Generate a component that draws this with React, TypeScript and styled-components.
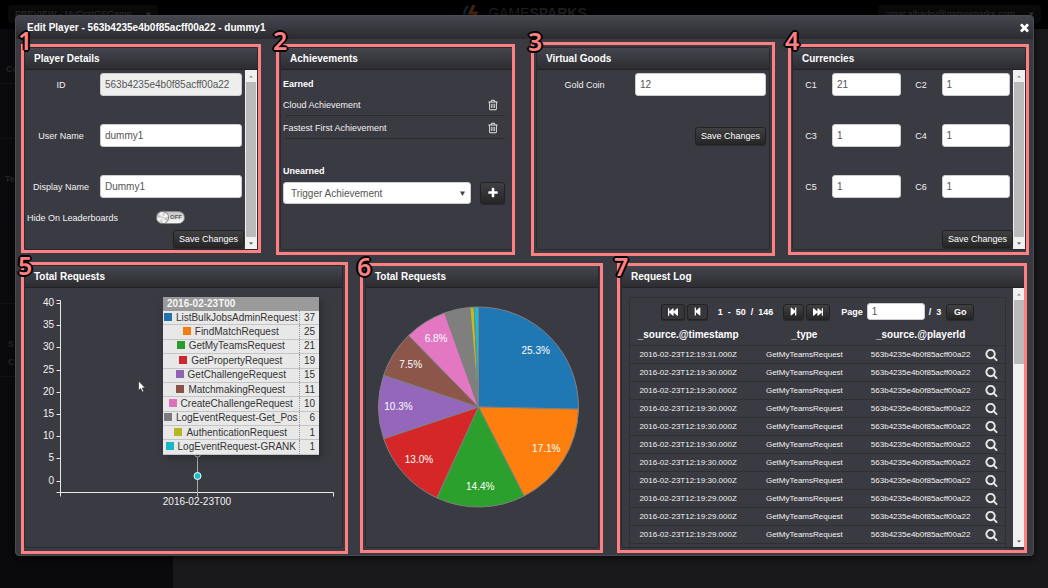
import React from "react";
import styled, { createGlobalStyle } from "styled-components";
import {
  FaFastBackward,
  FaFastForward,
  FaStepBackward,
  FaStepForward,
} from "react-icons/fa";

const PINK = "#ff8080";

const GlobalStyle = createGlobalStyle`
  * { box-sizing: border-box; }
  body {
    margin: 0;
    background: #19191b;
    color: #f2f2f2;
    font-family: "Liberation Sans", Arial, sans-serif;
    font-size: 9px;
    line-height: 12px;
  }
  button, input, select { font-family: inherit; margin: 0; }
`;

/* ---------- page behind the dialog ---------- */

const Page = styled.div`
  position: relative;
  min-height: 100vh;
  display: flex;
  flex-direction: column;
  overflow: hidden;
`;

const TopBar = styled.header`
  height: 29px;
  flex: none;
  display: grid;
  grid-template-columns: 1fr auto 1fr;
  align-items: start;
  padding: 5px 7px 0 8px;
  background: #000;
  color: #2b2b2b;
`;

const Picker = styled.button<{ $end?: boolean }>`
  justify-self: ${(p) => (p.$end ? "end" : "start")};
  height: 18px;
  display: flex;
  align-items: center;
  gap: 14px;
  padding: 0 7px;
  border: 0;
  border-radius: 3px;
  background: #0a0a0a;
  color: #303030;
  font-size: 9px;
`;

const Brand = styled.div`
  display: flex;
  align-items: center;
  gap: 8px;
  font-size: 14px;
  line-height: 17px;
  color: #1e1e1e;
`;

const Backdrop = styled.div`
  flex: 1;
  display: grid;
  grid-template-columns: 173px 1fr;
`;

const Sidebar = styled.nav`
  background: #0a0a0c;
  color: #262628;
  font-weight: bold;
  display: flex;
  flex-direction: column;
`;

const SideGroup = styled.div<{ $height: number; $indent: number; $top: number }>`
  height: ${(p) => p.$height}px;
  padding: ${(p) => p.$top}px ${(p) => p.$indent}px 0;
  display: flex;
  flex-direction: column;
  gap: 6px;
  border-bottom: 1px solid #111114;
`;

/* ---------- dialog ---------- */

const Dialog = styled.section`
  position: absolute;
  top: 15px;
  left: 15px;
  right: 14px;
  border: 1px solid #4b4b53;
  border-radius: 4px;
  background: #3a3a42;
  box-shadow: 0 2px 6px rgba(0, 0, 0, 0.7);
`;

const DialogHeader = styled.header`
  height: 23px;
  display: flex;
  align-items: center;
  justify-content: space-between;
  padding: 0 2px 0 11px;
  border-radius: 3px 3px 0 0;
  background: linear-gradient(#46464f, #2a2a2f);
`;

const DialogTitle = styled.h1`
  margin: 0;
  font-size: 10px;
  line-height: 12px;
  color: #fff;
`;

const CloseButton = styled.button`
  display: flex;
  padding: 0;
  border: 0;
  background: none;
  color: #fff;
`;

const DialogBody = styled.div`
  display: flex;
  flex-direction: column;
  gap: 15px;
  padding: 8px 7px 7px 8px;
`;

const PanelRow = styled.div<{ $columns: string }>`
  display: grid;
  grid-template-columns: ${(p) => p.$columns};
  gap: 22px;
`;

const PanelBox = styled.section`
  position: relative;
  min-width: 0;
  border: 1px solid #2a2a2e;
  border-radius: 3px;
`;

const PanelTitle = styled.h2`
  margin: 0;
  height: 22px;
  padding: 0 9px;
  border-bottom: 1px solid #232327;
  background: linear-gradient(#45454e, #2c2c31);
  font-size: 10px;
  line-height: 22px;
  color: #fff;
`;

const PanelBody = styled.div<{ $height: number }>`
  height: ${(p) => p.$height}px;
  display: flex;
  overflow: hidden;
`;

const PanelContent = styled.div`
  flex: 1;
  min-width: 0;
  position: relative;
`;

/* ---------- numbered highlight ---------- */

type Outset = [number, number, number, number];

const Frame = styled.div<{ $outset: Outset }>`
  position: absolute;
  inset: ${(p) => p.$outset.map((n) => `${-n - 1}px`).join(" ")};
  border: 3px solid ${PINK};
  pointer-events: none;
`;

const Marker = styled.span<{ $lift: number }>`
  position: absolute;
  left: -6px;
  top: ${(p) => -p.$lift}px;
  font-family: "Noto Sans", "Open Sans", sans-serif;
  font-size: 25px;
  font-weight: 600;
  line-height: 26px;
  color: ${PINK};
  text-shadow:
    2px 0 #000, -2px 0 #000, 0 2px #000, 0 -2px #000,
    1px 1px #000, -1px 1px #000, 1px -1px #000, -1px -1px #000;
`;

/* ---------- scroll bar ---------- */

const Track = styled.div`
  width: 12px;
  flex: none;
  display: flex;
  flex-direction: column;
  align-items: center;
  background: #f0f0f0;
`;

const Thumb = styled.div<{ $height?: number }>`
  width: 10px;
  ${(p) => (p.$height ? `height: ${p.$height}px;` : "flex: 1;")}
  background: #bababa;
`;

const Arrow = styled.svg<{ $last?: boolean }>`
  flex: none;
  width: 12px;
  height: 12px;
  ${(p) => p.$last && "margin-top: auto;"}
`;

function ScrollBar({ thumb }: { thumb?: number }) {
  return (
    <Track aria-hidden="true">
      <Arrow viewBox="0 0 12 12">
        <path d="M4 7.500L6 5.500L8 7.500Z" fill="#8c8c8c" />
      </Arrow>
      <Thumb $height={thumb} />
      <Arrow viewBox="0 0 12 12" $last>
        <path d="M4 5.500L6 7.500L8 5.500Z" fill="#444" />
      </Arrow>
    </Track>
  );
}

/* ---------- form parts ---------- */

const Button = styled.button`
  height: 18px;
  display: inline-flex;
  align-items: center;
  justify-content: center;
  padding: 0 5px;
  border: 1px solid #222;
  border-radius: 3px;
  background: linear-gradient(#404042, #262627);
  box-shadow: 0 1px 1px rgba(0, 0, 0, 0.3);
  color: #fff;
  font-size: 9px;
  line-height: 12px;
  white-space: nowrap;
`;

const TextBox = styled.input`
  width: 100%;
  min-width: 0;
  height: 23px;
  padding: 0 4px;
  border: 1px solid #ccc;
  border-radius: 3px;
  background: #fff;
  color: #555;
  font-size: 10px;
  &:read-only { background: #eee; }
`;

const Form = styled.form`
  display: flex;
  flex-direction: column;
  padding-top: 3px;
`;

const Fields = styled.div<{ $columns: string }>`
  display: grid;
  grid-template-columns: ${(p) => p.$columns};
  align-items: center;
  gap: 28px 3px;
  padding-right: 3px;
`;

const Label = styled.label`
  text-align: center;
  white-space: nowrap;
`;

const ToggleRow = styled.div`
  display: grid;
  grid-template-columns: 129px auto;
  align-items: center;
  justify-content: start;
  height: 13px;
  margin: 13px 0 6px;
  padding-left: 2px;
`;

const Toggle = styled.input`
  appearance: none;
  width: 29px;
  height: 13px;
  margin: 0;
  display: flex;
  align-items: center;
  border: 1px solid #888;
  border-radius: 7px;
  background: linear-gradient(#c4c4c4, #fafafa);
  &::before {
    content: "";
    width: 11px;
    height: 11px;
    border-radius: 50%;
    box-shadow: 0 0 1px 1px #777;
    background: conic-gradient(from 20deg, #ccc, #fff 12%, #bbb 25%, #fff 38%, #ccc 50%, #fff 62%, #bbb 75%, #fff 88%, #ccc);
  }
  &::after {
    content: "OFF";
    margin-left: 2px;
    font-size: 6px;
    line-height: 11px;
    font-weight: bold;
    color: #555;
  }
`;

const Actions = styled.div<{ $top?: number; $right?: number }>`
  display: flex;
  justify-content: flex-end;
  padding: ${(p) => p.$top ?? 0}px ${(p) => p.$right ?? 0}px 0 0;
`;

/* ---------- achievements ---------- */

const Achievements = styled.div`
  padding: 8px 8px 0 2px;
`;

const GroupTitle = styled.h3`
  margin: 0;
  font-size: 9px;
  line-height: 12px;
  color: #fff;
`;

const EarnedList = styled.ul`
  list-style: none;
  margin: 3px 0 26px;
  padding: 0;
`;

const EarnedItem = styled.li`
  height: 23px;
  display: flex;
  align-items: center;
  justify-content: space-between;
  padding-right: 6px;
  background: linear-gradient(#2b2b30, #2b2b30) 3px 100% / 100% 1px no-repeat;
`;

const IconButton = styled.button`
  display: flex;
  padding: 0;
  border: 0;
  background: none;
  color: #e8e8e8;
`;

const TriggerRow = styled.div`
  display: grid;
  grid-template-columns: 1fr 25px;
  gap: 9px;
  align-items: center;
  margin-top: 5px;
`;

const SelectWrap = styled.div`
  position: relative;
`;

const Select = styled.select`
  appearance: none;
  width: 100%;
  height: 22px;
  padding: 0 7px;
  border: 1px solid #ccc;
  border-radius: 3px;
  background: #fff;
  color: #555;
  font-size: 10px;
`;

const Caret = styled.svg`
  position: absolute;
  right: 6px;
  top: 9px;
  width: 5px;
  height: 5px;
  pointer-events: none;
`;

const SquareButton = styled(Button)`
  height: 22px;
  padding: 0;
`;

/* ---------- charts ---------- */

const Chart = styled.svg`
  display: block;
  width: 100%;
  height: 100%;
  font-size: 10px;
`;

const Tip = styled.table`
  position: absolute;
  left: 138px;
  top: 9px;
  width: 156px;
  height: 158px;
  border-collapse: collapse;
  opacity: 0.95;
  background: #f2f2f2;
  box-shadow: 3px 3px 6px rgba(30, 30, 30, 0.5);
  color: #333;
  font-size: 10px;
  line-height: 12px;
`;

const TipHead = styled.th`
  height: 14px;
  padding: 0 4px;
  background: #a0a0a0;
  color: #fff;
  text-align: left;
`;

const TipName = styled.td`
  padding: 0;
  border-bottom: 1px solid #ccc;
  text-align: center;
  white-space: nowrap;
`;

const TipValue = styled.td`
  width: 20px;
  padding: 0 4px 0 0;
  border-bottom: 1px solid #ccc;
  border-left: 1px dotted #999;
  text-align: right;
`;

const Swatch = styled.span<{ $color: string }>`
  display: inline-block;
  width: 8px;
  height: 8px;
  margin-right: 4px;
  background: ${(p) => p.$color};
`;

/* ---------- request log ---------- */

const LogBox = styled.div`
  margin: 9px 7px 0;
  border: 1px solid #2f2f34;
`;

const Pager = styled.div`
  height: 27px;
  display: flex;
  align-items: center;
  justify-content: center;
  gap: 2px;
  font-weight: bold;
  color: #fff;
`;

const PagerButton = styled(Button)<{ $width: number; $dim?: boolean }>`
  width: ${(p) => p.$width}px;
  height: 16px;
  padding: 0;
  font-weight: bold;
  ${(p) => p.$dim && "background: #36363a;"}
`;

const PagerText = styled.span`
  padding: 0 8px;
  white-space: pre;
`;

const PageJump = styled.label`
  display: flex;
  align-items: center;
  gap: 4px;
  padding: 0 3px 0 9px;
  white-space: nowrap;
`;

const PageBox = styled(TextBox)`
  width: 58px;
  height: 17px;
`;

const LogTable = styled.table`
  width: 100%;
  table-layout: fixed;
  border-collapse: collapse;
  text-align: center;
  white-space: nowrap;
`;

const LogColumn = styled.col<{ $share: number }>`
  width: ${(p) => p.$share}%;
`;

const LogHead = styled.th`
  height: 20px;
  padding: 0;
  font-size: 10px;
  color: #fff;
`;

const LogCell = styled.td`
  height: 18px;
  padding: 1px 0 0;
  border-top: 1px solid #2f2f34;
  font-size: 8px;
`;

const LogIconCell = styled(LogCell)`
  padding: 0;
`;

const LogIconButton = styled(IconButton)`
  margin: 0 auto;
`;

/* ---------- data ---------- */

const REQUESTS = [
  { name: "ListBulkJobsAdminRequest", value: 37, color: "#1f77b4" },
  { name: "FindMatchRequest", value: 25, color: "#ff7f0e" },
  { name: "GetMyTeamsRequest", value: 21, color: "#2ca02c" },
  { name: "GetPropertyRequest", value: 19, color: "#d62728" },
  { name: "GetChallengeRequest", value: 15, color: "#9467bd" },
  { name: "MatchmakingRequest", value: 11, color: "#8c564b" },
  { name: "CreateChallengeRequest", value: 10, color: "#e377c2" },
  { name: "LogEventRequest-Get_Pos", value: 6, color: "#7f7f7f" },
  { name: "AuthenticationRequest", value: 1, color: "#bcbd22" },
  { name: "LogEventRequest-GRANK", value: 1, color: "#17becf" },
];

const CURRENCIES = [
  ["C1", "21"],
  ["C2", "1"],
  ["C3", "1"],
  ["C4", "1"],
  ["C5", "1"],
  ["C6", "1"],
];

const LOG_SECONDS = [31, 30, 30, 30, 30, 30, 30, 30, 29, 29, 29];
const PLAYER_ID = "563b4235e4b0f85acff00a22";

/* ---------- icons ---------- */

function Icon({ size, d }: { size: number; d: string }) {
  return (
    <svg width={size} height={size} viewBox="0 0 1792 1792" fill="currentColor" aria-hidden="true">
      <path d={d} />
    </svg>
  );
}

const TRASH =
  "M704 736v576q0 14-9 23t-23 9h-64q-14 0-23-9t-9-23v-576q0-14 9-23t23-9h64q14 0 23 9t9 23zm256 0v576q0 14-9 23t-23 9h-64q-14 0-23-9t-9-23v-576q0-14 9-23t23-9h64q14 0 23 9t9 23zm256 0v576q0 14-9 23t-23 9h-64q-14 0-23-9t-9-23v-576q0-14 9-23t23-9h64q14 0 23 9t9 23zm128 724v-948h-896v948q0 22 7 40.500t14.500 27 10.500 8.500h832q3 0 10.500-8.500t14.500-27 7-40.500zm-672-1076h448l-48-117q-7-9-17-11h-317q-10 2-17 11zm928 32v64q0 14-9 23t-23 9h-96v948q0 83-47 143.500t-113 60.500h-832q-66 0-113-58.500t-47-141.500v-952h-96q-14 0-23-9t-9-23v-64q0-14 9-23t23-9h309l70-167q15-37 54-63t79-26h320q40 0 79 26t54 63l70 167h309q14 0 23 9t9 23z";
const SEARCH =
  "M1216 832q0-185-131.500-316.500t-316.500-131.500-316.500 131.500-131.500 316.500 131.500 316.500 316.500 131.500 316.500-131.500 131.500-316.500zm512 832q0 52-38 90t-90 38q-54 0-90-38l-343-342q-179 124-399 124-143 0-273.500-55.500t-225-150-150-225-55.500-273.500 55.500-273.500 150-225 225-150 273.500-55.500 273.500 55.500 225 150 150 225 55.500 273.500q0 220-124 399l343 343q37 37 37 90z";
const TIMES =
  "M1490 1322q0 40-28 68l-136 136q-28 28-68 28t-68-28l-294-294-294 294q-28 28-68 28t-68-28l-136-136q-28-28-28-68t28-68l294-294-294-294q-28-28-28-68t28-68l136-136q28-28 68-28t68 28l294 294 294-294q28-28 68-28t68 28l136 136q28 28 28 68t-28 68l-294 294 294 294q28 28 28 68z";
const PLUS =
  "M1600 736v192q0 40-28 68t-68 28h-416v416q0 40-28 68t-68 28h-192q-40 0-68-28t-28-68v-416h-416q-40 0-68-28t-28-68v-192q0-40 28-68t68-28h416v-416q0-40 28-68t68-28h192q40 0 68 28t28 68v416h416q40 0 68 28t28 68z";

/* ---------- pieces ---------- */

type PanelProps = {
  number: number;
  title: string;
  height: number;
  outset: Outset;
  lift: number;
  scroll?: boolean;
  thumb?: number;
  children: React.ReactNode;
};

function Panel({ number, title, height, outset, lift, scroll, thumb, children }: PanelProps) {
  return (
    <PanelBox>
      <PanelTitle>{title}</PanelTitle>
      <PanelBody $height={height}>
        <PanelContent>{children}</PanelContent>
        {scroll && <ScrollBar thumb={thumb} />}
      </PanelBody>
      <Frame $outset={outset}>
        <Marker $lift={lift}>{number}</Marker>
      </Frame>
    </PanelBox>
  );
}

function LineChart() {
  const ticks = [40, 35, 30, 25, 20, 15, 10, 5, 0];
  return (
    <>
      <Chart viewBox="0 0 317 259" preserveAspectRatio="xMinYMin meet">
        <g stroke="#e8e8e8" strokeWidth="1" fill="none">
          <path d="M31.500 12.500H35.500V208.500" />
          <path d="M31.500 204.500H308.500V208.500" />
          <path d="M172.500 166V208.500" stroke="#aaa" />
          {ticks.map((t, i) => (
            <path key={t} d={`M31.500 ${Math.round(15 + i * 22.2) + 0.5}H35.500`} />
          ))}
        </g>
        <g fill="#f2f2f2">
          {ticks.map((t, i) => (
            <text key={t} x="29" y={Math.round(18 + i * 22.2)} textAnchor="end">
              {t}
            </text>
          ))}
          <text x="172" y="217" textAnchor="middle">2016-02-23T00</text>
        </g>
        <circle cx="172.500" cy="166" r="3" fill="#3a3a42" stroke="#ddd" />
        <circle cx="172.500" cy="188" r="3.500" fill="#17becf" stroke="#fff" />
        <path d="M113.500 93v9.500l2.200-2 1.500 3.400 1.600-.7-1.500-3.300h3z" fill="#fff" stroke="#222" strokeWidth=".6" />
      </Chart>
      <Tip>
        <thead>
          <tr>
            <TipHead colSpan={2}>2016-02-23T00</TipHead>
          </tr>
        </thead>
        <tbody>
          {REQUESTS.map((r) => (
            <tr key={r.name}>
              <TipName>
                <Swatch $color={r.color} />
                {r.name}
              </TipName>
              <TipValue>{r.value}</TipValue>
            </tr>
          ))}
        </tbody>
      </Tip>
    </>
  );
}

function PieChart() {
  const total = REQUESTS.reduce((sum, r) => sum + r.value, 0);
  const cx = 112.5;
  const cy = 119;
  const radius = 100;
  const point = (turn: number, r: number) => [
    cx + r * Math.sin(turn * 2 * Math.PI),
    cy - r * Math.cos(turn * 2 * Math.PI),
  ];
  let start = 0;
  return (
    <Chart viewBox="0 0 232 259" preserveAspectRatio="xMinYMin meet">
      {REQUESTS.map((r) => {
        const from = start;
        const share = r.value / total;
        start += share;
        const [x1, y1] = point(from, radius);
        const [x2, y2] = point(start, radius);
        const [tx, ty] = point(from + share / 2, radius * 0.8);
        return (
          <g key={r.name}>
            <path
              d={`M${cx} ${cy}L${x1} ${y1}A${radius} ${radius} 0 0 1 ${x2} ${y2}Z`}
              fill={r.color}
              stroke="#808080"
            />
            {share > 0.05 && (
              <text x={tx} y={ty + 3} textAnchor="middle" fill="#fff">
                {(share * 100).toFixed(1)}%
              </text>
            )}
          </g>
        );
      })}
    </Chart>
  );
}

function RequestLog() {
  return (
    <LogBox>
      <Pager>
        <PagerButton $width={24} $dim aria-label="First page"><FaFastBackward size={10} /></PagerButton>
        <PagerButton $width={21} $dim aria-label="Previous page"><FaStepBackward size={9} /></PagerButton>
        <PagerText>1  -  50  /  146</PagerText>
        <PagerButton $width={21} aria-label="Next page"><FaStepForward size={9} /></PagerButton>
        <PagerButton $width={24} aria-label="Last page"><FaFastForward size={10} /></PagerButton>
        <PageJump>
          Page
          <PageBox defaultValue="1" />
          <span>/ &nbsp;3</span>
        </PageJump>
        <PagerButton $width={28}>Go</PagerButton>
      </Pager>
      <LogTable>
        <colgroup>
          <LogColumn $share={31} />
          <LogColumn $share={31} />
          <LogColumn $share={31} />
          <LogColumn $share={7} />
        </colgroup>
        <thead>
          <tr>
            <LogHead>_source.@timestamp</LogHead>
            <LogHead>_type</LogHead>
            <LogHead>_source.@playerId</LogHead>
            <LogHead />
          </tr>
        </thead>
        <tbody>
          {LOG_SECONDS.map((s, i) => (
            <tr key={i}>
              <LogCell>2016-02-23T12:19:{s}.000Z</LogCell>
              <LogCell>GetMyTeamsRequest</LogCell>
              <LogCell>{PLAYER_ID}</LogCell>
              <LogIconCell>
                <LogIconButton aria-label="View request"><Icon size={13} d={SEARCH} /></LogIconButton>
              </LogIconCell>
            </tr>
          ))}
          <tr>
            <LogCell colSpan={3} />
            <LogIconCell>
              <LogIconButton aria-label="View request"><Icon size={13} d={SEARCH} /></LogIconButton>
            </LogIconCell>
          </tr>
        </tbody>
      </LogTable>
    </LogBox>
  );
}

export default function App() {
  return (
    <>
      <GlobalStyle />
      <Page>
        <TopBar>
          <Picker>PREVIEW - MyFirstGSGame <span>▾</span></Picker>
          <Brand>
            <svg width="18" height="17" viewBox="0 0 18 17" aria-hidden="true">
              <path d="M6 1Q-1 8 5 15" fill="none" stroke="#0c2836" strokeWidth="2" />
              <path d="M12 0L8 8H14L9 16" fill="none" stroke="#4a220c" strokeWidth="3" />
            </svg>
            <span>GAME<b>SPARKS</b></span>
          </Brand>
          <Picker $end>omar.albadry@gamesparks.com <span>▾</span></Picker>
        </TopBar>
        <Backdrop>
          <Sidebar>
            <SideGroup $height={55} $indent={6} $top={34}>Co</SideGroup>
            <SideGroup $height={55} $indent={6} $top={0} />
            <SideGroup $height={165} $indent={5} $top={34}>Te</SideGroup>
            <SideGroup $height={73} $indent={8} $top={34}>
              <span>S</span>
              <span>C</span>
            </SideGroup>
          </Sidebar>
        </Backdrop>

        <Dialog role="dialog" aria-labelledby="dialog-title">
          <DialogHeader>
            <DialogTitle id="dialog-title">Edit Player - {PLAYER_ID} - dummy1</DialogTitle>
            <CloseButton aria-label="Close"><Icon size={13} d={TIMES} /></CloseButton>
          </DialogHeader>
          <DialogBody>
            <PanelRow $columns="repeat(4, 1fr)">
              <Panel number={1} title="Player Details" height={179} outset={[3, 3, 3, 3]} lift={20} scroll>
                <Form>
                  <Fields $columns="72px 1fr">
                    <Label htmlFor="player-id">ID</Label>
                    <TextBox id="player-id" defaultValue={PLAYER_ID} readOnly />
                    <Label htmlFor="user-name">User Name</Label>
                    <TextBox id="user-name" defaultValue="dummy1" />
                    <Label htmlFor="display-name">Display Name</Label>
                    <TextBox id="display-name" defaultValue="Dummy1" />
                  </Fields>
                  <ToggleRow>
                    <label htmlFor="hide">Hide On Leaderboards</label>
                    <Toggle id="hide" type="checkbox" />
                  </ToggleRow>
                  <Actions $right={1}>
                    <Button type="button">Save Changes</Button>
                  </Actions>
                </Form>
              </Panel>

              <Panel number={2} title="Achievements" height={179} outset={[3, 1, 5, 4]} lift={20}>
                <Achievements>
                  <GroupTitle>Earned</GroupTitle>
                  <EarnedList>
                    {["Cloud Achievement", "Fastest First Achievement"].map((name) => (
                      <EarnedItem key={name}>
                        {name}
                        <IconButton aria-label={`Remove ${name}`}><Icon size={12} d={TRASH} /></IconButton>
                      </EarnedItem>
                    ))}
                  </EarnedList>
                  <GroupTitle>Unearned</GroupTitle>
                  <TriggerRow>
                    <SelectWrap>
                      <Select aria-label="Achievement to trigger">
                        <option>Trigger Achievement</option>
                      </Select>
                      <Caret viewBox="0 0 5 5"><path d="M0 0.500H5L2.500 5Z" fill="#444" /></Caret>
                    </SelectWrap>
                    <SquareButton type="button" aria-label="Add achievement"><Icon size={12} d={PLUS} /></SquareButton>
                  </TriggerRow>
                </Achievements>
              </Panel>

              <Panel number={3} title="Virtual Goods" height={179} outset={[5, 5, 6, 5]} lift={17}>
                <Form>
                  <Fields $columns="95px 1fr">
                    <Label htmlFor="gold-coin">Gold Coin</Label>
                    <TextBox id="gold-coin" defaultValue="12" />
                  </Fields>
                  <Actions $top={31} $right={3}>
                    <Button type="button">Save Changes</Button>
                  </Actions>
                </Form>
              </Panel>

              <Panel number={4} title="Currencies" height={179} outset={[3, 3, 5, 4]} lift={20} scroll>
                <Form>
                  <Fields $columns="36px 1fr 35px 1fr">
                    {CURRENCIES.map(([code, amount]) => (
                      <React.Fragment key={code}>
                        <Label htmlFor={code}>{code}</Label>
                        <TextBox id={code} defaultValue={amount} />
                      </React.Fragment>
                    ))}
                  </Fields>
                  <Actions $top={32}>
                    <Button type="button">Save Changes</Button>
                  </Actions>
                </Form>
              </Panel>
            </PanelRow>

            <PanelRow $columns="319fr 234fr 405fr">
              <Panel number={5} title="Total Requests" height={259} outset={[3, 5, 6, 3]} lift={13}>
                <LineChart />
              </Panel>
              <Panel number={6} title="Total Requests" height={259} outset={[2, 4, 5, 5]} lift={13}>
                <PieChart />
              </Panel>
              <Panel number={7} title="Request Log" height={259} outset={[2, 1, 5, 4]} lift={13} scroll thumb={64}>
                <RequestLog />
              </Panel>
            </PanelRow>
          </DialogBody>
        </Dialog>
      </Page>
    </>
  );
}
